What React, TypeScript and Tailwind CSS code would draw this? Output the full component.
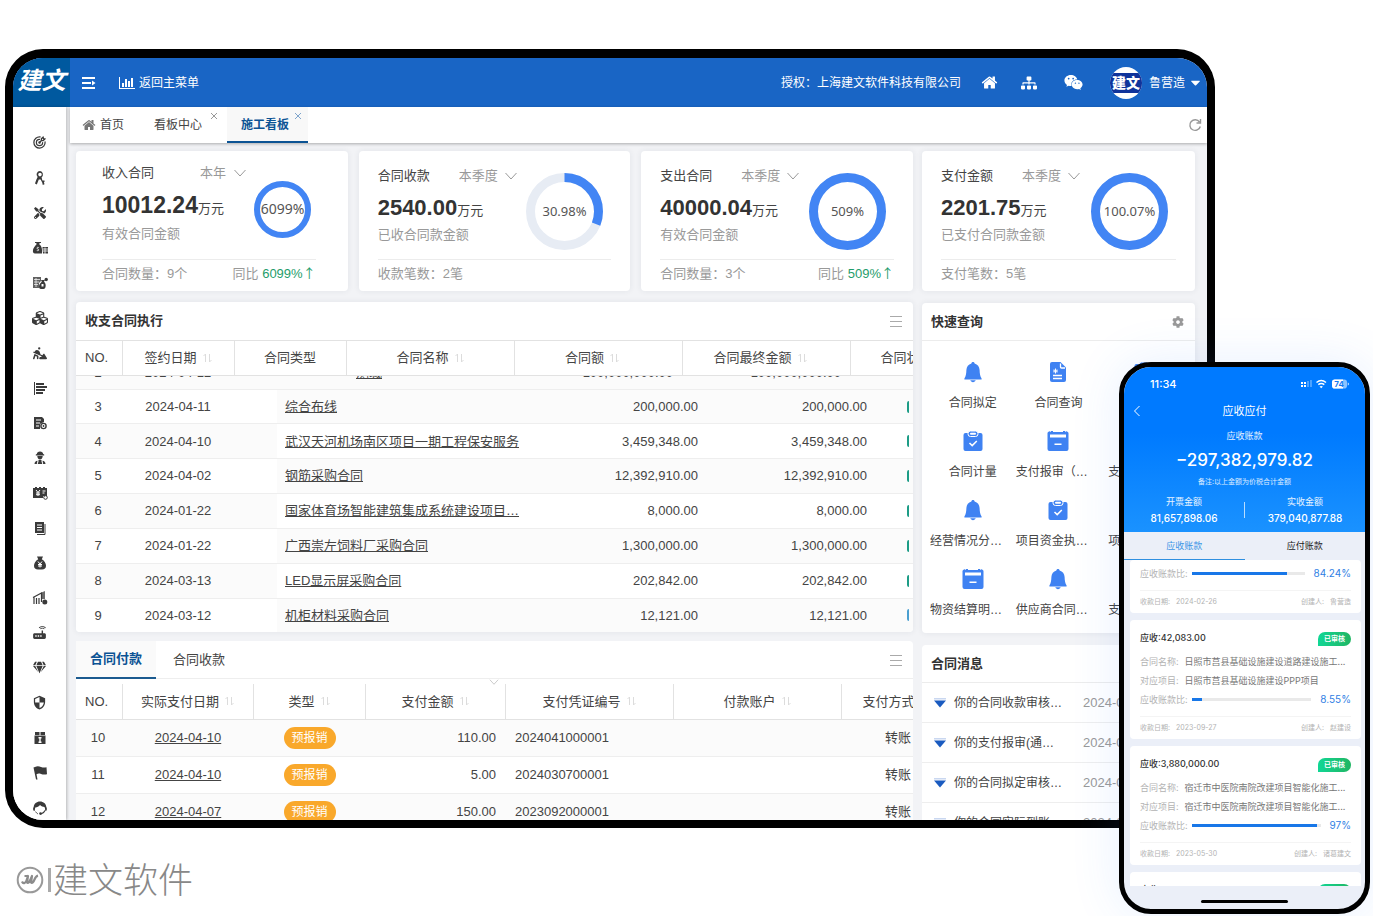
import type { ReactNode } from "react";
import {
  FaCaretDown,
  FaCog,
  FaCubes,
  FaGem,
  FaSitemap,
  FaTools,
  FaWeixin,
} from "react-icons/fa";
import { FaPersonDigging } from "react-icons/fa6";
import { MdRouter, MdSecurity } from "react-icons/md";
import { TbTargetArrow } from "react-icons/tb";

type IconProps = { className?: string };

function Glyph({
  className = "w-4 h-4",
  viewBox = "0 0 16 16",
  children,
}: {
  className?: string;
  viewBox?: string;
  children: ReactNode;
}) {
  return (
    <svg aria-hidden viewBox={viewBox} fill="currentColor" className={className}>
      {children}
    </svg>
  );
}

function IconHome({ className }: IconProps) {
  return (
    <Glyph className={className} viewBox="0 0 1792 1792">
      <path d="M1472 992v480q0 26-19 45t-45 19h-384v-384h-256v384h-384q-26 0-45-19t-19-45v-480q0-1 .5-3t.5-3l575-474 575 474q1 2 1 6zm223-69l-62 74q-8 9-21 11h-3q-13 0-21-7l-692-577-692 577q-12 8-24 7-13-2-21-11l-62-74q-8-10-7-23.5t11-21.5l719-599q32-26 76-26t76 26l244 204v-195q0-14 9-23t23-9h192q14 0 23 9t9 23v408l219 182q10 8 11 21.5t-7 23.5z" />
    </Glyph>
  );
}

function IconBars({ className }: IconProps) {
  return (
    <Glyph className={className} viewBox="0 0 2048 1792">
      <path d="M640 896v512h-256v-512h256zm384-512v1024h-256v-1024h256zm1024 1152v128h-2048v-1536h128v1408h1920zm-640-896v768h-256v-768h256zm384-384v1152h-256v-1152h256z" />
    </Glyph>
  );
}

function IconCollapse() {
  return (
    <Glyph className="w-[14px] h-[14px]" viewBox="0 0 14 14">
      <path d="M0 1h13v2H0zM0 6h9v2H0zM0 11h13v2H0zM10 4.500 13.500 7 10 9.500z" />
    </Glyph>
  );
}

function IconChevron({ className }: IconProps) {
  return (
    <svg aria-hidden viewBox="0 0 12 8" fill="none" stroke="currentColor" className={className}>
      <path d="M.5 1 6 7l5.500-6" />
    </svg>
  );
}

function IconClose({ className }: IconProps) {
  return (
    <svg aria-hidden viewBox="0 0 8 8" fill="none" stroke="currentColor" className={className}>
      <path d="m1 1 6 6M7 1 1 7" />
    </svg>
  );
}

function IconSort() {
  return (
    <svg aria-hidden viewBox="0 0 9 10" fill="none" stroke="#dcdcdc" className="w-[9px] h-[10px] shrink-0">
      <path d="M.5 3 2.500 1v8M8.500 7l-2 2V1" />
    </svg>
  );
}

function IconMenu() {
  return (
    <svg aria-hidden viewBox="0 0 12 12" stroke="#aaa" className="w-3 h-3">
      <path d="M0 1.500h12M0 6.500h12M0 11.500h12" />
    </svg>
  );
}

// Sidebar drawings that no icon pack has
function IconCompass() {
  return (
    <Glyph>
      <path d="M8 1a3.500 3.500 0 0 0-2.400 6L4.200 10 3 13.600l1.800.8L6.800 9.500h1.800l1.600 3 .6 2.500 1.700-.8-.6-2.300-1.500-1.200-.8-3.500A3.500 3.500 0 0 0 8 1Zm0 1.800a1.800 1.800 0 1 1 0 3.600 1.800 1.800 0 0 1 0-3.600Z" />
      <path d="M10 10.500h2.500v1.500H10z" />
    </Glyph>
  );
}

function IconBagTable() {
  return (
    <Glyph>
      <path d="M4 2h4l-.8 2.200C9 5.500 10 7.500 10 10v3.500H3C1.300 13.500.6 12 1 10c.4-2 1.600-3.800 3.600-5.800Z" />
      <path d="M10.500 7H16v6.500h-5zM3 2h6v1H3z" />
      <path d="M11 9h5M11 11h5M13 7.500V14M6.800 7.500c-2-.8-2.600 1.200-1 1.500 1.600.4 1.300 2.200-1 1.500" stroke="#fff" strokeWidth=".8" fill="none" />
    </Glyph>
  );
}

function IconDocBag() {
  return (
    <Glyph>
      <path d="M1 2h8v4L7 8v5H1z" opacity=".8" />
      <path d="M2 4.500h6M2 7h5M2 9.500h4M4 3v9" stroke="#fff" strokeWidth=".7" />
      <path d="M9 5h4l-1 1.800c1.500 1.200 2 3 1.500 5.200-.2 1.300-1 2-2 2H9c-1.500 0-2-1-2-2.500C7 9.500 8.500 7.800 9.800 6.800Z" />
      <path d="M9.500 9h2v2.500h-2z" fill="#fff" />
      <circle cx="14.200" cy="4.500" r="1.700" />
    </Glyph>
  );
}

function IconAlign() {
  return (
    <Glyph>
      <path d="M2 2h1v13H2zM4 3h8v2H4zM4 6h11v2H4zM4 9h9v2H4zM4 12h7v2H4z" />
    </Glyph>
  );
}

function IconDocGear() {
  return (
    <Glyph>
      <path d="M2 2h8l2 2v3L8 9v5H2z" />
      <path d="M4 5h5M4 8h4M4 11h3" stroke="#fff" strokeWidth="1.200" />
      <circle cx="11.500" cy="11" r="2.600" fill="#fff" stroke="currentColor" strokeWidth="1.400" />
      <circle cx="11.500" cy="11" r=".9" />
    </Glyph>
  );
}

function IconWorker() {
  return (
    <Glyph>
      <path d="M8 1.500c1.900 0 3 1.200 3.200 2.600l1 .4v1H3.800v-1l1-.4C5 2.700 6.100 1.500 8 1.500ZM5.300 6h5.400c0 2-1.100 3.400-2.700 3.400S5.300 8 5.300 6Z" />
      <path d="M6.500 10h3v1.500l.8 2.500H5.700l.8-2.500zM5.500 10.800 4.800 14H2.500c0-2 1.200-2.900 3-3.200ZM10.500 10.800l.7 3.200h2.300c0-2-1.200-2.900-3-3.200Z" />
    </Glyph>
  );
}

function IconYenBoard() {
  return (
    <Glyph>
      <path d="M1 3h2V2h2v1h2V2h2v1h2V2h2v1h2v8h-4v2H1z" />
      <path d="m4 5 2 2.500L8 5M6 7.500V11M4 8h4M4 9.700h4M10.500 6h3M10.500 8h2" stroke="#fff" fill="none" />
      <circle cx="13.500" cy="12.500" r="1.800" fill="#fff" stroke="currentColor" />
    </Glyph>
  );
}

function IconSheets() {
  return (
    <Glyph>
      <path d="M3 2h9v11H3z" />
      <path d="M13 4v10.500H5" stroke="currentColor" fill="none" />
      <path d="M5 5h5M5 7.500h5M5 10h5" stroke="#fff" />
    </Glyph>
  );
}

function IconYenBag() {
  return (
    <Glyph>
      <path d="M5 1.500h6L9.800 4.300C12.500 5.800 14 8.300 14 10.800c0 2.600-1.500 3.700-4 3.700H6c-2.500 0-4-1.100-4-3.700 0-2.500 1.500-5 4.200-6.500Z" />
      <path d="m6 6.500 2 2.500 2-2.500M8 9v3.500M6 9.500h4M6 11h4" stroke="#fff" fill="none" />
    </Glyph>
  );
}

function IconBuilding() {
  return (
    <Glyph>
      <path d="M2 7v7M4.500 8v6M7 8v6M1 7.500 9.500 3v9" stroke="currentColor" strokeWidth="1.200" fill="none" />
      <path d="M9.500 2.500 13 1v8H9.500z" opacity=".75" />
      <circle cx="12.800" cy="12" r="2.500" />
    </Glyph>
  );
}

function IconZipBox() {
  return (
    <Glyph>
      <path d="M3 2h10v3H3zM2.500 5.500h11V14h-11z" />
      <path d="M7.500 2h1v3.500h-1zM6.500 7h3v1.500h-.8v3h.8V13h-3v-1.500h.8v-3h-.8z" fill="#fff" />
    </Glyph>
  );
}

function IconPennant() {
  return (
    <Glyph>
      <path d="M1.500 2.500 3 2c2-1 4-.8 6 0 2 .7 3.500.7 5.500.2l.5 7c-2 .6-4 .5-6-.2-1.700-.6-3-.5-4.500.2l1 5.300H4z" />
    </Glyph>
  );
}

function IconOperator() {
  return (
    <Glyph>
      <path d="M8 1.500c3.500 0 6 2.300 6.300 5.500.8.800.8 3 0 3.700h-1.200c.2-1.500 0-2.700-.6-3.700-1.600-.1-3.300-.8-4.500-2C6.900 6.500 5 7.400 3.300 7.500c-.4 1-.5 2-.4 3.200H1.700c-.8-.8-.8-2.900 0-3.700C2 3.800 4.500 1.500 8 1.500Z" />
      <path d="M13 10.500c-.8 2-2 3-4 3.300" fill="none" stroke="currentColor" strokeWidth="1.200" />
      <circle cx="8.500" cy="13.600" r="1.300" />
      <path d="M3.500 11.500c.6 1.200 1.500 2 2.500 2.500" fill="none" stroke="currentColor" strokeWidth=".8" />
    </Glyph>
  );
}

const SIDEBAR: { label: string; icon: ReactNode }[] = [
  { label: "目标", icon: <TbTargetArrow size={15} /> },
  { label: "设计", icon: <IconCompass /> },
  { label: "工具", icon: <FaTools size={12} /> },
  { label: "成本", icon: <IconBagTable /> },
  { label: "合同", icon: <IconDocBag /> },
  { label: "物资", icon: <FaCubes size={16} /> },
  { label: "施工", icon: <FaPersonDigging size={14} /> },
  { label: "进度", icon: <IconAlign /> },
  { label: "单据", icon: <IconDocGear /> },
  { label: "劳务", icon: <IconWorker /> },
  { label: "资金", icon: <IconYenBoard /> },
  { label: "资料", icon: <IconSheets /> },
  { label: "财务", icon: <IconYenBag /> },
  { label: "项目", icon: <IconBuilding /> },
  { label: "设备", icon: <MdRouter size={17} /> },
  { label: "质量", icon: <FaGem size={13} /> },
  { label: "安全", icon: <MdSecurity size={15} /> },
  { label: "归档", icon: <IconZipBox /> },
  { label: "里程碑", icon: <IconPennant /> },
  { label: "客服", icon: <IconOperator /> },
];

type Stat = {
  title: string;
  period: string;
  amount: string;
  note: string;
  count: string;
  ratio: string;
  fill: number;
  trend?: string;
  small?: boolean;
};

const STATS: Stat[] = [
  {
    title: "收入合同",
    period: "本年",
    amount: "10012.24",
    note: "有效合同金额",
    count: "合同数量：9个",
    ratio: "6099%",
    fill: 1,
    trend: "6099%",
    small: true,
  },
  {
    title: "合同收款",
    period: "本季度",
    amount: "2540.00",
    note: "已收合同款金额",
    count: "收款笔数：2笔",
    ratio: "30.98%",
    fill: 0.3098,
  },
  {
    title: "支出合同",
    period: "本季度",
    amount: "40000.04",
    note: "有效合同金额",
    count: "合同数量：3个",
    ratio: "509%",
    fill: 1,
    trend: "509%",
  },
  {
    title: "支付金额",
    period: "本季度",
    amount: "2201.75",
    note: "已支付合同款金额",
    count: "支付笔数：5笔",
    ratio: "100.07%",
    fill: 1,
  },
];

const CONTRACTS = [
  ["3", "2024-04-11", "综合布线", "200,000.00"],
  ["4", "2024-04-10", "武汉天河机场南区项目一期工程保安服务", "3,459,348.00"],
  ["5", "2024-04-02", "钢筋采购合同", "12,392,910.00"],
  ["6", "2024-01-22", "国家体育场智能建筑集成系统建设项目…", "8,000.00"],
  ["7", "2024-01-22", "广西崇左饲料厂采购合同", "1,300,000.00"],
  ["8", "2024-03-13", "LED显示屏采购合同", "202,842.00"],
  ["9", "2024-03-12", "机柜材料采购合同", "12,121.00"],
];

const PAYMENTS = [
  ["10", "2024-04-10", "110.00", "2024041000001"],
  ["11", "2024-04-10", "5.00", "2024030700001"],
  ["12", "2024-04-07", "150.00", "2023092000001"],
];

type QuickIcon = "bell" | "file" | "clip" | "cal";

const QUICK: { label: string; icon: QuickIcon }[] = [
  { label: "合同拟定", icon: "bell" },
  { label: "合同查询", icon: "file" },
  { label: "支付登记", icon: "clip" },
  { label: "合同计量", icon: "clip" },
  { label: "支付报审（…", icon: "cal" },
  { label: "支付合同查询", icon: "bell" },
  { label: "经营情况分…", icon: "bell" },
  { label: "项目资金执…", icon: "clip" },
  { label: "项目收支查询", icon: "cal" },
  { label: "物资结算明…", icon: "cal" },
  { label: "供应商合同…", icon: "bell" },
  { label: "支付明细查询", icon: "clip" },
];

const MESSAGES = ["你的合同收款审核…", "你的支付报审(通…", "你的合同拟定审核…", "你的合同实际到账…"];

function Ring({ ratio, fill, small }: { ratio: string; fill: number; small?: boolean }) {
  const size = small ? 57 : 77;
  const stroke = small ? 6 : 9;
  const r = (size - stroke) / 2;
  const length = 2 * Math.PI * r;
  return (
    <svg width={size} height={size} className="shrink-0" role="img" aria-label={ratio}>
      <circle cx={size / 2} cy={size / 2} r={r} fill="none" stroke="#e7ecf4" strokeWidth={stroke} />
      <circle
        cx={size / 2}
        cy={size / 2}
        r={r}
        fill="none"
        stroke="#4285f4"
        strokeWidth={stroke}
        strokeDasharray={`${length * fill} ${length}`}
        transform={`rotate(-90 ${size / 2} ${size / 2})`}
      />
      <text
        x="50%"
        y="50%"
        dy="4"
        textAnchor="middle"
        fill="#555"
        className={`font-['Noto_Sans',sans-serif] ${small ? "text-[14px]" : "text-[13px]"}`}
      >
        {ratio}
      </text>
    </svg>
  );
}

function StatCard({ stat }: { stat: Stat }) {
  const { small } = stat;
  return (
    <section
      className={`flex flex-col h-[140px] min-w-0 shrink-0 rounded bg-white shadow-[0_0_6px_rgba(40,50,80,0.08)] ${
        small ? "pl-[26px] pr-8" : "px-[19px]"
      }`}
    >
      <div className="flex justify-between">
        <div className={small ? "pt-3" : "pt-[15px]"}>
          <div className="flex items-center h-5">
            <h2 className={`shrink-0 text-[#444] ${small ? "w-[98px]" : "w-[81px]"}`}>{stat.title}</h2>
            <span className="relative flex items-center text-[#999]">
              <select
                aria-label={`${stat.title}统计周期`}
                className={`appearance-none bg-transparent outline-none ${small ? "w-[46px]" : "w-[58px]"}`}
              >
                <option>{stat.period}</option>
              </select>
              <IconChevron className="absolute right-0 w-3 h-2 pointer-events-none" />
            </span>
          </div>
          <p className="flex items-baseline mt-[6px] h-8 whitespace-nowrap text-[#444]">
            <b className={`leading-8 text-[#333] ${small ? "text-[23px]" : "text-[22px]"}`}>
              {stat.amount}
            </b>
            万元
          </p>
          <p className={`h-5 leading-5 text-[#999] ${small ? "mt-[3px]" : "mt-px"}`}>{stat.note}</p>
        </div>
        <div className={small ? "pt-[30px] pr-[5px]" : "pt-[22px] pr-2"}>
          <Ring ratio={stat.ratio} fill={stat.fill} small={small} />
        </div>
      </div>
      <div className="flex items-center justify-between mt-auto h-8 pb-1 border-t border-[#ececec] text-[#999] whitespace-nowrap">
        <span>{stat.count}</span>
        {stat.trend && (
          <span>
            同比 <span className="text-[#1f9d6b]">{stat.trend}</span>
            <span className="text-[#1f9d6b] font-['Noto_Sans_CJK_SC',sans-serif]">↑</span>
          </span>
        )}
      </div>
    </section>
  );
}

function HeadCell({
  children,
  sort = true,
  className = "",
}: {
  children: ReactNode;
  sort?: boolean;
  className?: string;
}) {
  return (
    <th className={`border-r border-[#e2e2e2] last:border-r-0 font-normal ${className}`}>
      <span className="flex items-center justify-center gap-[6px] whitespace-nowrap">
        {children}
        {sort && <IconSort />}
      </span>
    </th>
  );
}

function Cols({ widths }: { widths: number[] }) {
  return (
    <colgroup>
      {widths.map((w, i) => (
        <col key={i} style={{ width: w }} />
      ))}
      <col />
    </colgroup>
  );
}

function ContractPanel() {
  return (
    <section className="shrink-0 overflow-hidden rounded bg-white shadow-[0_0_6px_rgba(40,50,80,0.08)]">
      <header className="flex items-center justify-between h-[38px] pl-[9px] pr-[11px]">
        <h2 className="font-bold text-[#333]">收支合同执行</h2>
        <button type="button" aria-label="更多">
          <IconMenu />
        </button>
      </header>
      <table className="w-full table-fixed border-y border-[#e2e2e2]">
        <Cols widths={[46, 112, 112, 168, 168, 168]} />
        <thead>
          <tr className="h-[35px]">
            <th className="border-r border-[#e2e2e2] pl-[9px] text-left font-normal">NO.</th>
            <HeadCell>签约日期</HeadCell>
            <HeadCell sort={false}>合同类型</HeadCell>
            <HeadCell>合同名称</HeadCell>
            <HeadCell className="pr-3">合同额</HeadCell>
            <HeadCell className="pr-3">合同最终金额</HeadCell>
            <th className="overflow-hidden pl-[30px] text-left font-normal whitespace-nowrap">合同状态</th>
          </tr>
        </thead>
      </table>
      {/* the list is scrolled: row 2 is half under the header */}
      <div className="flex flex-col justify-end h-[14px] overflow-hidden">
        <table className="w-full shrink-0 table-fixed bg-[#fbfbfb]">
          <Cols widths={[44, 116, 278, 168, 168]} />
          <tbody>
            <tr className="h-[33px] border-b border-[#eee]">
              <td className="text-center">2</td>
              <td className="text-center">2024-04-12</td>
              <td className="pl-[120px]">
                <a href="#contract" className="underline">
                  测城
                </a>
              </td>
              <td className="pr-[9px] text-right">100,000,000.00</td>
              <td className="pr-[9px] text-right">100,000,000.00</td>
              <td />
            </tr>
          </tbody>
        </table>
      </div>
      <table className="w-full h-[242px] table-fixed">
        <Cols widths={[44, 116, 41, 261, 168, 169]} />
        <tbody>
          {CONTRACTS.map(([no, date, name, amount], i) => {
            const left = i % 2 ? "bg-[#fbfbfb]" : "bg-white";
            const right = i % 2 ? "bg-white" : "bg-[#fbfbfb]";
            return (
              <tr key={no} className="border-b border-[#eee] last:border-b-0">
                <td className={`text-center ${left}`}>{no}</td>
                <td className={`text-center ${left}`}>{date}</td>
                <td className={left} />
                <td className={`pl-2 whitespace-nowrap ${right}`}>
                  <a href="#contract" className="underline">
                    {name}
                  </a>
                </td>
                <td className={`pr-2 text-right ${right}`}>{amount}</td>
                <td className={`pr-2 text-right ${right}`}>{amount}</td>
                <td className={`pr-1 ${right}`}>
                  <i
                    className={`block ml-auto w-[2px] h-3 rounded-l-full ${
                      no === "9" ? "bg-[#4a9fd0]" : "bg-[#1d9c86]"
                    }`}
                  />
                </td>
              </tr>
            );
          })}
        </tbody>
      </table>
    </section>
  );
}

function PaymentPanel() {
  return (
    <section className="shrink-0 rounded-t bg-white">
      <header className="flex items-center h-[38px] pr-[11px] border-b border-[#eee]">
        <button
          type="button"
          className="w-20 h-[38px] bg-[#fafafa] border-b-2 border-[#1b5a8f] font-bold text-[#0b5394]"
        >
          合同付款
        </button>
        <button type="button" className="w-[86px] h-[38px]">
          合同收款
        </button>
        <button type="button" aria-label="更多" className="ml-auto">
          <IconMenu />
        </button>
      </header>
      <div className="flex h-[5px] pl-[413px] text-[#bbb]">
        <IconChevron className="w-[10px] h-[6px]" />
      </div>
      <table className="w-full table-fixed border-b border-[#e2e2e2]">
        <Cols widths={[46, 131, 112, 140, 168, 168]} />
        <thead>
          <tr className="h-[35px]">
            <th className="border-r border-[#e2e2e2] pl-[9px] text-left font-normal">NO.</th>
            <HeadCell>实际支付日期</HeadCell>
            <HeadCell>类型</HeadCell>
            <HeadCell>支付金额</HeadCell>
            <HeadCell>支付凭证编号</HeadCell>
            <HeadCell>付款账户</HeadCell>
            <th className="overflow-hidden pl-[21px] text-left font-normal whitespace-nowrap">支付方式</th>
          </tr>
        </thead>
      </table>
      <table className="w-full table-fixed">
        <Cols widths={[44, 136, 107, 142, 168, 168]} />
        <tbody>
          {PAYMENTS.map(([no, date, amount, voucher]) => (
            <tr key={no} className="h-[37px] border-b border-[#eee] odd:bg-[#fbfbfb]">
              <td className="text-center">{no}</td>
              <td className="text-center">
                <a href="#payment" className="underline">
                  {date}
                </a>
              </td>
              <td className="text-center">
                <span className="inline-block w-[52px] h-[22px] rounded-full bg-[#f9a82b] text-xs leading-[22px] text-white align-middle">
                  预报销
                </span>
              </td>
              <td className="pr-[9px] text-right">{amount}</td>
              <td className="pl-[10px]">{voucher}</td>
              <td />
              <td className="pl-11 whitespace-nowrap">转账</td>
            </tr>
          ))}
        </tbody>
      </table>
    </section>
  );
}

function QuickGlyph({ icon }: { icon: QuickIcon }) {
  const cls = "w-[22px] h-[22px] text-[#3f82f2]";
  if (icon === "bell") {
    return (
      <Glyph className={cls} viewBox="0 0 22 22">
        <path d="M11 1c.9 0 1.500.6 1.600 1.400C15.600 3.200 17.400 5.700 17.600 9c.1 3.600.5 6.300 2 8.500v.9H2.400v-.9c1.500-2.200 1.900-4.900 2-8.500.2-3.300 2-5.800 5-6.600C9.500 1.600 10.100 1 11 1ZM8.300 19.300h5.400c-.4 1.100-1.400 1.900-2.700 1.900s-2.300-.8-2.700-1.900Z" />
      </Glyph>
    );
  }
  if (icon === "file") {
    return (
      <Glyph className={cls} viewBox="0 0 22 22">
        <path d="M5 1h8.500L19 6.500V19a2 2 0 0 1-2 2H5a2 2 0 0 1-2-2V3a2 2 0 0 1 2-2Z" />
        <path d="M13.500 2.500V6a1 1 0 0 0 1 1H18M6 14.500h9M6 17.500h9" stroke="#fff" strokeWidth="1.300" fill="none" />
        <path d="M8.500 7.500v5M6 10h5M7 8.500l3 3M10 8.500l-3 3" stroke="#fff" />
      </Glyph>
    );
  }
  if (icon === "clip") {
    return (
      <Glyph className={cls} viewBox="0 0 22 22">
        <rect x="1.500" y="3" width="19" height="18" rx="2" />
        <rect x="6" y="1" width="10" height="5.500" rx="2.500" stroke="#fff" />
        <rect x="8" y="2.700" width="6" height="2" rx="1" fill="#fff" />
        <path d="m7.500 13 2.700 2.600 4.600-4.600" stroke="#fff" strokeWidth="1.500" fill="none" />
      </Glyph>
    );
  }
  return (
    <Glyph className={cls} viewBox="0 0 22 22">
      <path d="M4 1h2v1h10V1h2v1.200A2 2 0 0 1 21.500 4v15a2 2 0 0 1-2 2h-17a2 2 0 0 1-2-2V4A2 2 0 0 1 4 2.200Z" />
      <path d="M3 4.500h16v3H3zM7.500 13.500h7V15h-7z" fill="#fff" />
    </Glyph>
  );
}

function QuickPanel() {
  return (
    <section className="h-[330px] shrink-0 rounded bg-white shadow-[0_0_6px_rgba(40,50,80,0.08)]">
      <header className="flex items-center justify-between h-[38px] pl-[9px] pr-[11px] border-b border-[#ececec]">
        <h2 className="font-bold text-[#333]">快速查询</h2>
        <button type="button" aria-label="设置">
          <FaCog className="w-3 h-3 text-[#999]" />
        </button>
      </header>
      <div className="grid grid-cols-3 px-2 pt-[20px]">
        {QUICK.map((q) => (
          <a key={q.label} href="#quick" className="flex flex-col items-center h-[69px] text-xs">
            <QuickGlyph icon={q.icon} />
            <span
              className={`w-full mt-[10px] leading-5 whitespace-nowrap ${
                q.label.endsWith("…") ? "text-left" : "text-center"
              }`}
            >
              {q.label}
            </span>
          </a>
        ))}
      </div>
    </section>
  );
}

function MessagePanel() {
  return (
    <section className="shrink-0 rounded bg-white">
      <h2 className="h-[38px] pl-[9px] leading-[38px] border-b border-[#ececec] font-bold text-[#333]">
        合同消息
      </h2>
      <ul>
        {MESSAGES.map((m) => (
          <li key={m} className="flex items-center h-10 pl-3 border-b border-[#eee] text-xs">
            <svg aria-hidden viewBox="0 0 12 10" className="w-3 h-[10px] mr-2 shrink-0">
              <path d="M0 0h12v1.500H0z" fill="#c9d7f0" />
              <path d="M0 2.500h12L6 9.500z" fill="#1a5bc0" />
            </svg>
            <span className="w-[129px] whitespace-nowrap">{m}</span>
            <time className="text-[13px] text-[#999]">2024-04-12</time>
          </li>
        ))}
      </ul>
    </section>
  );
}

function TopBar() {
  return (
    <header className="flex items-center h-[49px] shrink-0 bg-[#1965c5] text-xs text-white">
      <div className="flex items-center justify-center w-[57px] h-full bg-[#00599f] text-2xl font-bold italic pb-1">
        建文
      </div>
      <button type="button" aria-label="收起菜单" className="ml-3">
        <IconCollapse />
      </button>
      <a href="#menu" className="flex items-center gap-1 ml-[23px]">
        <IconBars className="w-4 h-[14px]" />
        返回主菜单
      </a>
      <span className="ml-auto">授权：上海建文软件科技有限公司</span>
      <a href="#home" aria-label="首页" className="ml-5">
        <IconHome className="w-[17px] h-[17px]" />
      </a>
      <a href="#org" aria-label="组织" className="ml-[23px]">
        <FaSitemap size={16} />
      </a>
      <a href="#wechat" aria-label="微信" className="ml-[27px]">
        <FaWeixin size={19} />
      </a>
      <button type="button" className="flex items-center ml-[27px] pr-1">
        <span className="flex flex-col justify-center w-8 h-8 mr-[7px] rounded-full bg-white overflow-hidden">
          <span className="h-5 bg-[#10349b] text-[14px] leading-5 font-black">建文</span>
        </span>
        鲁营造
        <FaCaretDown size={15} className="ml-[3px]" />
      </button>
    </header>
  );
}

function TabBar() {
  return (
    <nav className="flex h-9 shrink-0 ml-1 bg-white text-xs shadow-[0_1px_3px_rgba(0,0,0,0.3)]">
      <a href="#home" className="flex items-center gap-1 pl-3">
        <IconHome className="w-[14px] h-[14px] text-[#777]" />
        首页
      </a>
      <a href="#boards" className="relative flex items-center ml-[30px] pr-4">
        看板中心
        <IconClose className="absolute right-0 top-[5px] w-2 h-2 text-[#999]" />
      </a>
      <a
        href="#site"
        className="relative flex items-center justify-center ml-[9px] w-[81px] pt-[2px] pr-[5px] bg-[#f8f8f8] border-b-2 border-[#0b5394] font-bold text-[#0b5394]"
      >
        施工看板
        <IconClose className="absolute right-[6px] top-[5px] w-2 h-2 text-[#7fa5cc]" />
      </a>
      <button type="button" aria-label="刷新" className="ml-auto pr-[5px] text-[#999]">
        <svg aria-hidden viewBox="0 0 14 14" fill="none" stroke="currentColor" className="w-[14px] h-[14px]">
          <path d="M12.300 8.500a5.300 5.300 0 1 1-.8-4.500M12.500 1v4h-4" strokeWidth="1.400" />
        </svg>
      </button>
    </nav>
  );
}

function Desktop() {
  return (
    <div className="flex flex-col flex-1 min-h-0 mr-[158px] ml-[5px] overflow-hidden rounded-[38px] border-8 border-t-[9px] border-black bg-white text-[13px] text-[#444]">
      <TopBar />
      <div className="flex flex-1 min-h-0">
        <nav className="z-10 flex flex-col w-[53px] shrink-0 pt-[18px] bg-white text-[#3a3a3a] shadow-[1px_0_3px_rgba(0,0,0,0.25)]">
          {SIDEBAR.map((item) => (
            <a
              key={item.label}
              href="#module"
              aria-label={item.label}
              className="flex items-center justify-center h-[35px] shrink-0"
            >
              {item.icon}
            </a>
          ))}
        </nav>
        <div className="flex flex-col flex-1 min-w-0 bg-[#f2f3f6]">
          <TabBar />
          <main className="flex gap-[9px] pl-[10px] pr-3 pt-2 min-h-0">
            <div className="flex flex-col flex-1 min-w-0">
              <div className="grid grid-cols-3 gap-[11px] mb-[11px]">
                {STATS.slice(0, 3).map((s) => (
                  <StatCard key={s.title} stat={s} />
                ))}
              </div>
              <ContractPanel />
              <div className="h-[9px] shrink-0" />
              <PaymentPanel />
            </div>
            <div className="flex flex-col gap-3 w-[273px] shrink-0">
              <StatCard stat={STATS[3]} />
              <QuickPanel />
              <MessagePanel />
            </div>
          </main>
        </div>
      </div>
    </div>
  );
}

type Bill = {
  amount?: string;
  name?: string;
  project?: string;
  percent: number;
  date: string;
  owner: string;
};

const BILLS: Bill[] = [
  { percent: 84.24, date: "2024-02-26", owner: "鲁营造" },
  {
    amount: "42,083.00",
    name: "日照市莒县基础设施建设道路建设施工...",
    project: "日照市莒县基础设施建设PPP项目",
    percent: 8.55,
    date: "2023-09-27",
    owner: "赵建设",
  },
  {
    amount: "3,880,000.00",
    name: "宿迁市中医院南院改建项目智能化施工...",
    project: "宿迁市中医院南院改建项目智能化施工...",
    percent: 97,
    date: "2023-05-30",
    owner: "诸葛建文",
  },
  {
    amount: "−3,383,545.73",
    name: "宿迁市中医院南院改建项目智能化施工...",
    project: "宿迁市中医院南院改建项目智能化施工...",
    percent: 50,
    date: "2023-05-18",
    owner: "诸葛建文",
  },
];

function BillCard({ bill }: { bill: Bill }) {
  return (
    <article className="shrink-0 px-[10px] rounded bg-white text-[9px] text-[#b3b3b3]">
      {bill.amount ? (
        <>
          <div className="flex items-center justify-between h-8 pt-1 text-[#333]">
            <h3 className="font-medium">应收:{bill.amount}</h3>
            <span className="w-[33px] h-[14px] mt-[2px] rounded-[7px] rounded-bl-none bg-linear-to-r from-[#10d795] to-[#1fb562] text-center text-[7px] leading-[14px] font-bold text-white">
              已审核
            </span>
          </div>
          <p className="flex gap-[6px] h-[19px] items-center whitespace-nowrap">
            合同名称: <span className="text-[#777]">{bill.name}</span>
          </p>
          <p className="flex gap-[6px] h-[19px] items-center whitespace-nowrap">
            对应项目: <span className="text-[#777]">{bill.project}</span>
          </p>
        </>
      ) : (
        <div className="h-1" />
      )}
      <div className="flex items-center h-[19px]">
        <span className="w-[52px]">应收账款比:</span>
        <span className="flex-1 h-[3px] bg-[#e9e9e9]">
          <i className="block h-full bg-[#1877e8]" style={{ width: `${bill.percent}%` }} />
        </span>
        <span className="ml-[9px] text-[10px] text-[#2f80e4]">{bill.percent}%</span>
      </div>
      <footer className="flex justify-between items-center h-[23px] mt-[7px] border-t border-[#f4f4f4] text-[7px]">
        <span>
          收款日期:<span className="ml-[6px]">{bill.date}</span>
        </span>
        <span>
          创建人:<span className="ml-[6px]">{bill.owner}</span>
        </span>
      </footer>
    </article>
  );
}

function Phone() {
  return (
    <aside className="absolute z-20 right-[3px] bottom-[2px] flex flex-col w-[251px] h-[552px] overflow-hidden rounded-[32px] border-[5px] border-black bg-[#ebeff8] shadow-[0_0_50px_rgba(60,130,255,0.12)] font-['Inter','Noto_Sans_CJK_SC',sans-serif]">
      <header className="flex flex-col h-[165px] shrink-0 bg-linear-to-b from-[#007aff] from-40% to-[#1a92ff] text-center text-white">
        <div className="flex items-center h-[34px] pl-[26px] pr-4">
          <span className="text-[11px] font-medium">11:34</span>
          <svg aria-hidden viewBox="0 0 52 12" fill="#fff" className="w-[52px] h-3 ml-auto">
            <path d="M4 4h2v2H4zM4 7h2v2H4zM7 4h2v2H7zM7 7h2v2H7z" />
            <path d="M10 3h2v6h-2zM13 2h2v7h-2z" opacity=".3" />
            <path
              d="M19.500 4.500c3-2.500 6.500-2.500 9.500 0M21.300 6.700c2-1.500 4-1.500 6 0"
              fill="none"
              stroke="#fff"
              strokeWidth="1.500"
            />
            <path d="M24.200 10.200 22.500 8.500c1-.8 2.400-.8 3.400 0Z" />
            <rect x="35" y="1.500" width="15" height="9" rx="2.800" opacity=".55" />
            <path d="M37.800 1.500H46v9h-8.200a2.800 2.800 0 0 1-2.800-2.800V4.300a2.800 2.800 0 0 1 2.800-2.800ZM50.800 4.500c1.300.5 1.300 2.500 0 3z" />
            <text x="42" y="9" textAnchor="middle" fill="#1678f0" className="text-[8px] font-bold">
              74
            </text>
          </svg>
        </div>
        <div className="relative flex items-center justify-center h-5 text-[11px]">
          <button type="button" aria-label="返回" className="absolute left-[9px]">
            <svg aria-hidden viewBox="0 0 8 12" fill="none" stroke="#fff" className="w-2 h-3">
              <path d="M6.500 1 1.500 6l5 5" />
            </svg>
          </button>
          应收应付
        </div>
        <p className="mt-[7px] text-[9px] leading-4 text-white/90">应收账款</p>
        <p className="mt-1 text-[17px] leading-6 font-medium">−297,382,979.82</p>
        <p className="mt-1 text-[7px] leading-3 text-white/85">备注:以上金额为价税合计金额</p>
        <div className="flex items-center mt-[6px]">
          <div className="flex-1 text-[10px] leading-4 font-medium">
            <p className="text-[9px] font-normal text-white/90">开票金额</p>
            81,657,898.06
          </div>
          <i className="w-px h-4 bg-white/70" />
          <div className="flex-1 text-[10px] leading-4 font-medium">
            <p className="text-[9px] font-normal text-white/90">实收金额</p>
            379,040,877.88
          </div>
        </div>
      </header>
      <div className="flex h-7 shrink-0 text-[9px]">
        <button type="button" className="flex-1 border-b border-[#2e8fe0] text-[#3b96e6]">
          应收账款
        </button>
        <button type="button" className="flex-1 text-[#222]">
          应付账款
        </button>
      </div>
      <div className="flex flex-col flex-1 gap-[7px] min-h-0 pl-[6px] pr-1 overflow-hidden">
        {BILLS.map((b) => (
          <BillCard key={b.date} bill={b} />
        ))}
      </div>
      <div className="flex items-center justify-center h-[23px] shrink-0 pt-2">
        <i className="w-[87px] h-[3px] rounded-full bg-black" />
      </div>
    </aside>
  );
}

export default function App() {
  return (
    <div className="relative flex flex-col h-screen overflow-hidden pt-[49px] bg-white font-['Liberation_Sans','Noto_Sans_CJK_SC',sans-serif]">
      <Desktop />
      <Phone />
      <footer className="flex items-center h-[88px] shrink-0 pl-4 pt-4 text-[35px] leading-none font-light text-[#888]">
        <svg aria-hidden viewBox="0 0 28 28" className="w-7 h-7">
          <circle cx="14" cy="14" r="12.300" fill="none" stroke="#999" strokeWidth="2" />
          <path
            d="M6 15.500c1 2.500 3.500 2 4.500-1l1.500-4.500-1 6.500c1 1.500 2.500-.5 3.500-3l1.500-3.500-1 6.500c1 1.500 2.500-.5 3.500-3 .8-2 2-3.500 3.500-3.800M8.500 10H12"
            fill="none"
            stroke="#8c8c8c"
            strokeWidth="2.200"
            strokeLinejoin="round"
          />
        </svg>
        <i className="w-[3px] h-6 ml-1 mr-[2px] bg-[#aaa]" />
        建文软件
      </footer>
    </div>
  );
}
